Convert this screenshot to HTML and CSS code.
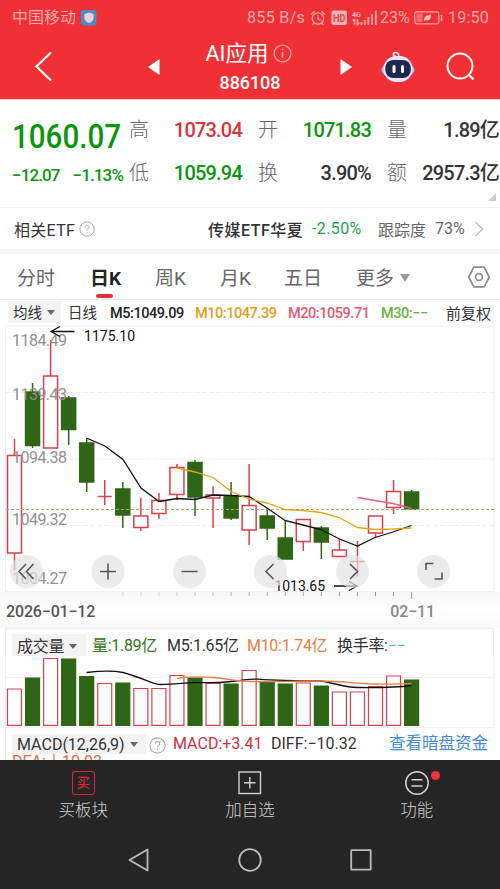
FILE: index.html
```
<!DOCTYPE html>
<html lang="zh-CN">
<head>
    <meta charset="UTF-8">
    <meta name="viewport" content="width=device-width, initial-scale=1.0">
    <title>AI应用 886108</title>
    <link rel="stylesheet" href="styles.css">
</head>
<body>

    <!-- Status bar -->
    <div class="status">
        <span class="carrier">中国移动</span>
        <svg class="shield" width="16" height="16" viewBox="0 0 16 16">
            <rect width="15.5" height="15.5" rx="3" fill="#468fc4"/>
            <path d="M8 2.6l4.6 1.7v3.5c0 2.6-2 4.2-4.6 5.3-2.6-1.1-4.6-2.7-4.6-5.3V4.3z" fill="#f2cbd3"/>
        </svg>
        <span class="speed">855 B/s</span>
        <svg class="status-icons" width="70" height="20" viewBox="310 7 70 20" fill="none" stroke="#f9a3a5" stroke-width="1.3">
            <circle cx="318" cy="17.5" r="5.7"/>
            <path d="M318 14v4l2.5 1.5M311.3 13.5l3.2-3.2M324.7 13.5l-3.2-3.2M314 22.2l-1.3 1.6M322 22.2l1.3 1.6"/>
            <rect x="331.5" y="9.5" width="15.5" height="14.5" rx="2" fill="#f9b4b5" stroke="none"/>
            <text class="hd" x="333" y="20.5" textLength="12.5" lengthAdjust="spacingAndGlyphs">HD</text>
            <text class="g4" x="352" y="15.5" textLength="9" lengthAdjust="spacingAndGlyphs">4G</text>
            <path d="M354.5 18v5.5M352.8 19.8l1.7-1.8M357.5 18v5.5l1.7-1.8M361.5 21v3M364.8 19v5M368.3 16v8M372 13v11M375.8 9.5v14.5" stroke-width="1.8"/>
        </svg>
        <span class="percent">23%</span>
        <svg class="battery" width="29" height="14" viewBox="0 0 29 14" fill="none" stroke="#f9a3a5" stroke-width="1.2">
            <rect x=".8" y=".8" width="24" height="12" rx="2"/>
            <path d="M27.5 4v6" stroke-width="1.5"/>
            <rect x="2.5" y="2.5" width="6" height="8.5" fill="#f56a6e" stroke="none"/>
            <path d="M10 10c0-4 2-6 7-6.5 0 5-2 7-5.5 5.5z" fill="#fac0c0" stroke="none"/>
        </svg>
        <span class="clock">19:50</span>
    </div>

    <!-- Title bar -->
    <div class="header">
        <svg class="back" width="20" height="32" viewBox="0 0 20 32"><path d="M17 1.5L2.5 15.5 17 29.5" fill="none" stroke="#fff" stroke-width="2.2"/></svg>
        <svg class="prev" width="12" height="18" viewBox="0 0 12 18"><path d="M11.5 1v16L0 9z" fill="#fff"/></svg>
        <div class="title">
            <div class="name">AI应用<svg width="19" height="19" viewBox="0 0 19 19" fill="none" stroke="#f9a3a5" stroke-width="1.3"><circle cx="9.5" cy="9.5" r="8.4"/><path d="M9.5 7.8v6M9.5 4.8v1.5" stroke-width="1.5"/></svg></div>
            <div class="code">886108</div>
        </div>
        <svg class="next" width="12" height="18" viewBox="0 0 12 18"><path d="M.5 1v16L12 9z" fill="#fff"/></svg>
        <svg class="robot" width="34" height="32" viewBox="0 0 34 32">
            <path d="M14.5 5.5c-3-1.5-3-4 .3-4 2.2 0 3 1.5 3 4" fill="none" stroke="#fff" stroke-width="1.5"/>
            <ellipse cx="17" cy="19" rx="16.5" ry="8" fill="#b3b5f6"/>
            <rect x="2.5" y="5" width="29" height="26" rx="12.5" fill="#e6e4ff"/>
            <rect x="4.3" y="9" width="25.5" height="18" rx="8" fill="#1c2a50"/>
            <path d="M13 15.5v5M21.5 15.5v5" stroke="#fff" stroke-width="3" stroke-linecap="round"/>
        </svg>
        <svg class="search" width="30" height="30" viewBox="0 0 30 30" fill="none" stroke="#fff" stroke-width="2"><circle cx="14" cy="14" r="12.5"/><path d="M22.5 22.5l5 5"/></svg>
    </div>

    <!-- Quote -->
    <div class="quote">
        <div class="last">
            <div class="price">1060.07</div>
            <div class="change"><span>−12.07</span><span>−1.13%</span></div>
        </div>
        <div class="stats">
            <span class="label">高</span><span class="num up">1073.04</span>
            <span class="label">开</span><span class="num down">1071.83</span>
            <span class="label">量</span><span class="num">1.89亿</span>
            <span class="label">低</span><span class="num down">1059.94</span>
            <span class="label">换</span><span class="num">3.90%</span>
            <span class="label">额</span><span class="num">2957.3亿</span>
        </div>
        <div class="corner"></div>
    </div>

    <div class="etf">
        <span class="etf-label">相关ETF</span>
        <svg class="help" width="16" height="16" viewBox="0 0 16 16"><circle cx="8" cy="8" r="7.2"/><path d="M5.9 6.5c0-3 4.2-2.7 4.2 0 0 1.5-2.1 1.6-2.1 3.2M8 11v1.3"/></svg>
        <span class="etf-name">传媒ETF华夏</span>
        <span class="etf-change">-2.50%</span>
        <span class="track">跟踪度</span>
        <span class="track-num">73%</span>
        <svg class="arrow" width="10" height="16" viewBox="0 0 10 16"><path d="M1.5 1l7 7-7 7" fill="none" stroke="#c2c2c2" stroke-width="1.5"/></svg>
    </div>

    <!-- Period tabs -->
    <div class="tabs">
        <span class="tab">分时</span>
        <span class="tab active">日K</span>
        <span class="tab">周K</span>
        <span class="tab">月K</span>
        <span class="tab">五日</span>
        <span class="tab">更多<i class="caret"></i></span>
        <svg class="gear" width="24" height="22" viewBox="0 0 24 22" fill="none" stroke="#8c8c8c" stroke-width="1.7"><path d="M6.8 1.2h10.4l5 9.8-5 9.8H6.8L1.8 11z" stroke-linejoin="round"/><circle cx="12" cy="11" r="3.4"/></svg>
    </div>

    <div class="averages">
        <span class="select">均线<i class="caret"></i></span>
        <span class="kind">日线</span>
        <span class="m5">M5:1049.09</span>
        <span class="m10">M10:1047.39</span>
        <span class="m20">M20:1059.71</span>
        <span class="m30">M30:−−</span>
        <span class="adjust">前复权</span>
    </div>

    <!-- Candles -->
    <svg class="kline" width="500" height="267" viewBox="0 325 500 267">
        <g class="grid">
            <path d="M5.5 326V591.5H494V326z"/>
            <path d="M6 392.5h488M6 459h488M6 525.5h488" stroke-dasharray="5 2"/>
        </g>
        <g id="candles"></g>
        <path class="current" d="M6 509.5h488"/>
        <g class="scale">
            <text x="12" y="345.5" textLength="55">1184.49</text>
            <text x="12" y="400" textLength="55">1139.43</text>
            <text x="12" y="462.5" textLength="55">1094.38</text>
            <text x="12" y="525" textLength="55">1049.32</text>
            <text x="12" y="584" textLength="55">1004.27</text>
        </g>
        <polyline class="ma5" points="86.5,438 104.8,446 123,459.5 141,488 159,501.5 177,498.5 195,499.5 213,495 231,495.5 249,496.5 267,508 285,520.5 303,525 321,529.5 339.5,539 357.5,546 375,537.5 393,532 411.5,525.5"/>
        <polyline class="ma10" points="177,468 195,472 213,477.5 231,491.5 249,499 267,503 285,509.5 303,510.5 321,512.5 339,517.5 357.5,527.5 375,529.5 393,529 411.5,528"/>
        <polyline class="ma20" points="357.5,497.5 375,500.5 393,503.5 411.5,508.5"/>
        <g class="marks">
            <path d="M74.5 331.5H51M60 326.5l-9 5 9 5"/>
            <text x="84" y="340.5" textLength="51">1175.10</text>
            <path d="M334 586h23M349 581.5l8 4.5-8 4.5"/>
            <text x="274.5" y="590.5" textLength="50.5">1013.65</text>
        </g>
        <g class="buttons">
            <circle cx="26.5" cy="571.5" r="16.5"/>
            <circle cx="108" cy="571.5" r="16.5"/>
            <circle cx="189.5" cy="571.5" r="16.5"/>
            <circle cx="270.5" cy="571.5" r="16.5"/>
            <circle cx="352.5" cy="571.5" r="16.5"/>
            <circle cx="433.5" cy="571.5" r="16.5"/>
            <path d="M26 564l-7 7.5 7 7.5M33.5 564l-7 7.5 7 7.5M100 571.5h16M108 563.5v16M181.5 571.5h16M273.5 564l-7.5 7.5 7.5 7.5M350 564l7.5 7.5-7.5 7.5M426 570v-6.5h7.5M442 572.5v6.5h-7.5"/>
        </g>
    </svg>

    <div class="dates">
        <svg class="ticks" width="500" height="7"><g id="ticks"></g></svg>
        <span>2026−01−12</span><span class="end">02−11</span>
    </div>

    <!-- Volume -->
    <div class="volume">
        <span class="select">成交量<i class="caret"></i></span>
        <span class="vol">量:1.89亿</span>
        <span class="vm5">M5:1.65亿</span>
        <span class="vm10">M10:1.74亿</span>
        <span class="turn">换手率:<b>−−</b></span>
    </div>
    <svg class="bars" width="500" height="71" viewBox="0 657 500 71">
        <path class="edge" d="M5.5 657v71M494 657v71M6 677.5h488M6 727.5h488"/>
        <g id="volumes"></g>
        <path class="vline" d="M86.5 672.5C104 670.5 113 670.5 123 672.5C141 677 153 684.5 159 684.5C177 684.5 188 682.5 195 682.5S213 683.5 231 681.5S249 678.5 258 679.2S290 681 321 681C335 683 345 687.5 357 687.5S393 688 411.5 685.5"/>
        <path class="vline orange" d="M177 678.5C190 676 204 677 213 677.5S236 681 249 681.5S300 681 321 681S355 683.5 375 684S400 683.5 411.5 683.5"/>
    </svg>

    <!-- MACD -->
    <div class="macd">
        <div class="macd-row">
            <span class="select">MACD(12,26,9)<i class="caret"></i></span>
            <svg class="help" width="17" height="17" viewBox="0 0 16 16"><circle cx="8" cy="8" r="7.2"/><path d="M5.9 6.5c0-3 4.2-2.7 4.2 0 0 1.5-2.1 1.6-2.1 3.2M8 11v1.3"/></svg>
            <span class="macd-num">MACD:+3.41</span>
            <span class="diff">DIFF:−10.32</span>
            <span class="fund">查看暗盘资金</span>
        </div>
        <div class="dea">DEA:↓10.03</div>
    </div>

    <!-- Bottom menu -->
    <div class="menu">
        <div class="item">
            <span class="buy">买</span>
            买板块
        </div>
        <div class="item">
            <svg width="24" height="24" viewBox="0 0 24 24" fill="none" stroke="#d2d2d2" stroke-width="1.4"><rect x="1" y="1" width="21.5" height="21.5"/><path d="M6 11.8h11.5M11.8 6v11.5"/></svg>
            加自选
        </div>
        <div class="item">
            <svg width="24" height="24" viewBox="0 0 24 24" fill="none" stroke="#d2d2d2" stroke-width="1.5"><circle cx="12" cy="12" r="11.2"/><path d="M6.5 8.8h11M6.5 15h11"/></svg>
            功能
            <i class="dot"></i>
        </div>
    </div>

    <!-- System keys -->
    <div class="keys">
        <svg width="22" height="24" viewBox="0 0 22 24"><path d="M19.5 1.5v21L1.5 12z"/></svg>
        <svg width="24" height="24" viewBox="0 0 24 24"><circle cx="12" cy="12" r="10.8"/></svg>
        <svg width="22" height="24" viewBox="0 0 22 24"><rect x="1.2" y="2.2" width="19.5" height="19.5" rx=".5"/></svg>
    </div>

    <script src="chart.js"></script>
</body>
</html>
```

FILE: styles.css
```
* {
    box-sizing: border-box;
}
body {
    margin: 0;
    width: 500px;
    height: 889px;
    overflow: hidden;
    background: #fff;
    color: #333;
    font-family: Roboto, "Noto Sans CJK SC", sans-serif;
    white-space: nowrap;
}
svg {
    display: block;
    flex: none;
}
.status {
    display: flex;
    align-items: center;
    height: 35px;
    padding-left: 12px;
    background: #f13036;
    color: #f9a9ab;
    font-size: 16px;
}
.carrier {
    width: 69px;
    line-height: 20px;
}
.speed {
    width: 60px;
    margin-left: 150px;
    letter-spacing: 0.35px;
}
.status-icons {
    margin-left: 3px;
}
.hd {
    font-size: 10px;
    font-weight: 700;
    fill: #ed4247;
    stroke: none;
}
.g4 {
    font-size: 8px;
    font-weight: 700;
    fill: #f9b4b5;
    stroke: none;
}
.percent {
    width: 34px;
}
.clock {
    margin-left: 5px;
    letter-spacing: 0.2px;
}
.header {
    display: flex;
    align-items: center;
    height: 65px;
    padding-left: 34px;
    background: #f13036;
    border-bottom: 1px solid #f9d0c8;
    color: #fff;
}
.prev {
    margin-left: 94px;
}
.title {
    width: 180px;
    text-align: center;
}
.name {
    display: flex;
    justify-content: center;
    gap: 5px;
    height: 30px;
    padding-right: 2px;
    line-height: 31px;
    font-size: 21.5px;
}
.name svg {
    margin-top: 6px;
}
.code {
    height: 28px;
    line-height: 29px;
    font-size: 18px;
    font-weight: 500;
    letter-spacing: -0.1px;
}
.robot {
    margin-left: 29px;
}
.search {
    margin-left: 31px;
}
.quote {
    position: relative;
    display: flex;
    height: 108px;
    padding: 9px 0 0 12px;
    border-bottom: 1px solid #f0f0f0;
}
.last {
    width: 117px;
    color: #0b940e;
    font-weight: 500;
}
.price {
    height: 54px;
    line-height: 55px;
    font-size: 34px;
    transform: scaleX(0.87);
    transform-origin: left;
}
.change {
    display: flex;
    justify-content: space-between;
    width: 111px;
    line-height: 25px;
    font-size: 17px;
    letter-spacing: -0.9px;
}
.stats {
    display: grid;
    grid-template-columns: 34px 79px 41px 88px 37px 91px;
    grid-auto-rows: 43px;
    line-height: 43px;
}
.label {
    color: #666;
    font-size: 20px;
    font-weight: 300;
}
.num + .label {
    padding-left: 16px;
}
.label:nth-child(7) {
    padding-left: 0;
}
.num {
    text-align: right;
    font-size: 20px;
    font-weight: 500;
    letter-spacing: -0.8px;
}
.up {
    color: #d9343c;
}
.down {
    color: #0b940e;
}
.corner {
    position: absolute;
    right: 4px;
    bottom: 6px;
    border-left: 8px solid transparent;
    border-bottom: 8px solid #ccc;
}
.etf {
    display: flex;
    align-items: center;
    height: 41px;
    padding-left: 14px;
    font-size: 16px;
}
.etf-label {
    width: 65px;
    letter-spacing: 0.3px;
}
.help {
    fill: none;
    stroke: #aaa;
}
.etf-name {
    width: 104px;
    margin-left: 113px;
    font-weight: 500;
    letter-spacing: 0.5px;
}
.etf-change {
    width: 66px;
    color: #16a34e;
    letter-spacing: 0.4px;
}
.track,
.track-num {
    color: #666;
}
.track {
    width: 57px;
}
.track-num {
    width: 39px;
}
.tabs {
    display: flex;
    height: 51px;
    padding-left: 17px;
    border-top: 5px solid #f5f5f5;
    border-bottom: 1px solid #e6e6e6;
    line-height: 49px;
    color: #666;
    font-size: 19px;
}
.tab {
    position: relative;
    width: 65px;
}
.tab:nth-child(1) {
    width: 73px;
}
.tab:nth-child(4) {
    width: 64px;
}
.tab:nth-child(6) {
    width: 106px;
    padding-left: 7px;
}
.active {
    color: #222;
    font-weight: 700;
}
.active::after {
    content: "";
    position: absolute;
    left: 6px;
    bottom: 1px;
    width: 17px;
    height: 4px;
    border-radius: 2px;
    background: #dc3238;
}
.caret {
    display: inline-block;
    margin-left: 5px;
    border: 4px solid transparent;
    border-top: 5px solid #666;
    border-bottom: 0;
    vertical-align: 3px;
}
.tab .caret {
    margin-left: 6px;
    border-width: 8px 5.5px 0;
    border-top-color: #999;
    vertical-align: 3px;
}
.gear {
    margin: 12px 0 0 12px;
}
.averages {
    display: flex;
    height: 25px;
    padding-left: 8px;
    line-height: 28px;
    font-size: 14.5px;
}
.select {
    height: 22px;
    margin-top: 1px;
    padding-left: 5px;
    line-height: 25px;
    background: #f3f3f3;
}
.averages .select {
    width: 53px;
}
.kind {
    width: 49px;
    padding-left: 7px;
}
.m5,
.m10,
.m20,
.m30 {
    font-size: 14.5px;
    font-weight: 500;
    letter-spacing: -0.45px;
}
.m5 {
    width: 85px;
    color: #222;
}
.m10 {
    width: 93px;
    color: #e0a020;
}
.m20 {
    width: 93px;
    color: #e65a72;
}
.m30 {
    width: 65px;
    color: #69b544;
}
.adjust {
    font-size: 15px;
}
.grid path,
.edge {
    fill: none;
    stroke: #f0f0f0;
}
.current {
    stroke: #a5ad72;
    stroke-dasharray: 3 2;
}
.rise {
    fill: #fff;
    stroke: #d9404a;
    stroke-width: 1.5;
}
.fall {
    fill: #2f6616;
    stroke: #2f6616;
    stroke-width: 1.5;
}
.thin {
    stroke-width: 1.2;
}
.scale text {
    fill: #909090;
    font-size: 16px;
}
.ma5,
.ma10,
.ma20,
.vline {
    fill: none;
    stroke: #111;
    stroke-width: 1.3;
}
.ma10 {
    stroke: #e0a41e;
}
.ma20 {
    stroke: #e6627c;
}
.vline.orange {
    stroke: #e97c42;
}
.marks path {
    fill: none;
    stroke: #111;
    stroke-width: 1.3;
}
.marks text {
    fill: #111;
    font-size: 14px;
}
.buttons circle {
    fill: #e2e2e2;
    fill-opacity: 0.7;
}
.buttons path {
    fill: none;
    stroke: #555;
    stroke-width: 1.6;
}
.dates {
    position: relative;
    display: flex;
    justify-content: space-between;
    height: 36px;
    padding: 0 65px 0 6px;
    background: linear-gradient(#f7f7f7, #fff 50%, #f9f9f9);
    line-height: 39px;
    color: #555;
    font-size: 16px;
    font-weight: 500;
    letter-spacing: -0.15px;
}
.ticks {
    position: absolute;
    left: 0;
    top: 0;
    stroke: #999;
}
.end {
    color: #888;
}
.volume {
    display: flex;
    height: 29px;
    margin: 0 6px 0 5px;
    padding: 4px 0 0 6px;
    border: 1px solid #eee;
    border-bottom: 0;
    line-height: 25px;
    font-size: 16px;
    letter-spacing: -0.3px;
}
.volume .select {
    width: 74px;
}
.vol {
    width: 81px;
    padding-left: 6px;
    color: #2f7516;
}
.vm5 {
    width: 80px;
}
.vm10 {
    width: 90px;
    color: #e97c42;
}
.turn b {
    color: #58b7e8;
    font-weight: 400;
}
.macd {
    height: 32px;
    overflow: hidden;
    margin-left: 5px;
    padding-left: 6px;
    border-left: 1px solid #eee;
}
.macd-row {
    display: flex;
    height: 25px;
    padding-top: 5px;
    line-height: 22px;
    font-size: 16px;
}
.macd .select {
    flex: none;
    width: 134px;
    height: 20px;
    margin-top: 1px;
    line-height: 22px;
}
.macd .help {
    margin: 4px 7px 0 3px;
}
.macd-num {
    width: 98px;
    color: #d3303c;
}
.diff {
    width: 118px;
}
.fund {
    color: #4389d8;
    font-size: 16.5px;
}
.dea {
    line-height: 18px;
    font-size: 16px;
    color: #e26b45;
}
.menu {
    display: flex;
    height: 70px;
    background: #252525;
    color: #d2d2d2;
    font-size: 16.5px;
    font-weight: 300;
}
.item {
    position: relative;
    display: flex;
    flex: 1;
    flex-direction: column;
    align-items: center;
    padding-top: 11px;
    line-height: 31px;
}
.buy {
    width: 23px;
    height: 24px;
    border: 1.5px solid #e0283c;
    border-radius: 3px;
    line-height: 21px;
    text-align: center;
    color: #e0283c;
    font-size: 13px;
    font-weight: 500;
}
.dot {
    position: absolute;
    left: 98px;
    top: 11px;
    width: 9px;
    height: 9px;
    border-radius: 50%;
    background: #f0343a;
}
.keys {
    display: flex;
    justify-content: center;
    gap: 88px;
    height: 59px;
    padding-top: 18px;
    background: #252525;
}
.keys path,
.keys circle,
.keys rect {
    fill: none;
    stroke: #bbb;
    stroke-width: 1.8;
    stroke-linejoin: round;
}
```

FILE: chart.js
```
// kind, body top, body bottom, high, low, volume top
const days = [
    ["rise", 455.5, 553, 439, 570, 689],
    ["fall", 392, 445.5, 383, 448, 678],
    ["rise", 376, 448, 340, 448, 658.5],
    ["fall", 398, 429.5, 396, 445, 659],
    ["fall", 443, 482, 438, 492, 676.5],
    ["rise", 496.5, 496.5, 480, 505, 683.5],
    ["fall", 489, 515, 482, 528, 683],
    ["rise", 516, 527.5, 498, 531, 688.5],
    ["rise", 500.5, 513.5, 493, 519, 688.5],
    ["rise", 467.5, 494.5, 464, 500, 675.5],
    ["fall", 462.5, 497, 460, 516, 678],
    ["rise", 495, 498, 486.5, 528, 683.5],
    ["fall", 496, 518, 482, 520, 684],
    ["rise", 505.5, 530, 464, 545, 670.5],
    ["fall", 516, 528, 508, 540, 682],
    ["fall", 538, 559, 521, 559, 684],
    ["rise", 519.5, 541.5, 519.5, 551, 683],
    ["fall", 528, 542, 526, 559, 686],
    ["rise", 550, 556.5, 539, 556.5, 692],
    ["rise", 561.5, 561.5, 541, 577, 692],
    ["rise", 516, 533, 516, 538, 686.5],
    ["rise", 491.5, 507.5, 480, 514, 676],
    ["fall", 492, 509, 490, 509, 680]
];

let candles = "";
let volumes = "";
let ticks = "";
days.forEach(([kind, top, bottom, high, low, vol], i) => {
    const x = 14.5 + i * 18.05;
    // wick first, the hollow body covers its middle
    candles += `<path class="${kind}" d="M${x} ${high}V${low}"/>`;
    candles += `<path class="${kind}" d="M${x - 7} ${top}h14V${bottom}h-14z"/>`;
    volumes += `<path class="${kind} thin" d="M${x - 7} ${vol}h14V725.3h-14z"/>`;
    if (i > 5) {
        ticks += `<path d="M${x} 0v${i === days.length - 1 ? 7 : 4}" opacity="${Math.min(1, i / 18)}"/>`;
    }
});
document.getElementById("candles").innerHTML = candles;
document.getElementById("volumes").innerHTML = volumes;
document.getElementById("ticks").innerHTML = ticks;
```
